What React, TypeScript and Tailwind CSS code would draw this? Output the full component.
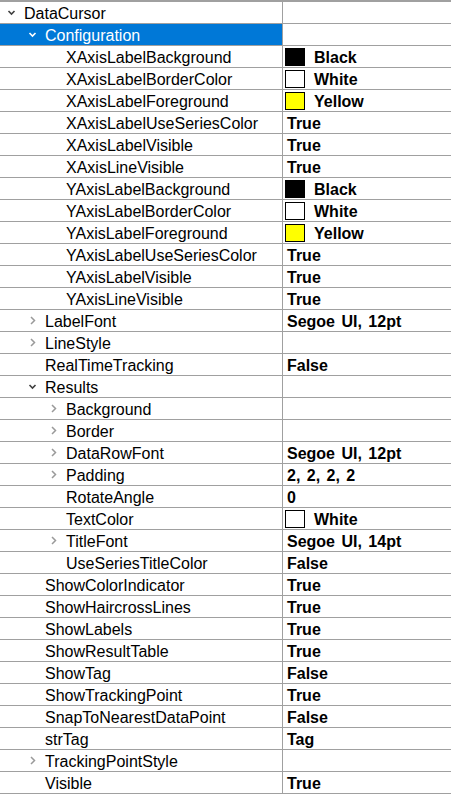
import React from "react";

type Row = {
  name: string;
  level: number;
  exp?: "open" | "closed";
  value?: string;
  swatch?: string;
  selected?: boolean;
};

const rows: Row[] = [
  { name: "DataCursor", level: 0, exp: "open" },
  { name: "Configuration", level: 1, exp: "open", selected: true },
  { name: "XAxisLabelBackground", level: 2, value: "Black", swatch: "#000000" },
  { name: "XAxisLabelBorderColor", level: 2, value: "White", swatch: "#ffffff" },
  { name: "XAxisLabelForeground", level: 2, value: "Yellow", swatch: "#ffff00" },
  { name: "XAxisLabelUseSeriesColor", level: 2, value: "True" },
  { name: "XAxisLabelVisible", level: 2, value: "True" },
  { name: "XAxisLineVisible", level: 2, value: "True" },
  { name: "YAxisLabelBackground", level: 2, value: "Black", swatch: "#000000" },
  { name: "YAxisLabelBorderColor", level: 2, value: "White", swatch: "#ffffff" },
  { name: "YAxisLabelForeground", level: 2, value: "Yellow", swatch: "#ffff00" },
  { name: "YAxisLabelUseSeriesColor", level: 2, value: "True" },
  { name: "YAxisLabelVisible", level: 2, value: "True" },
  { name: "YAxisLineVisible", level: 2, value: "True" },
  { name: "LabelFont", level: 1, exp: "closed", value: "Segoe UI, 12pt" },
  { name: "LineStyle", level: 1, exp: "closed" },
  { name: "RealTimeTracking", level: 1, value: "False" },
  { name: "Results", level: 1, exp: "open" },
  { name: "Background", level: 2, exp: "closed" },
  { name: "Border", level: 2, exp: "closed" },
  { name: "DataRowFont", level: 2, exp: "closed", value: "Segoe UI, 12pt" },
  { name: "Padding", level: 2, exp: "closed", value: "2, 2, 2, 2" },
  { name: "RotateAngle", level: 2, value: "0" },
  { name: "TextColor", level: 2, value: "White", swatch: "#ffffff" },
  { name: "TitleFont", level: 2, exp: "closed", value: "Segoe UI, 14pt" },
  { name: "UseSeriesTitleColor", level: 2, value: "False" },
  { name: "ShowColorIndicator", level: 1, value: "True" },
  { name: "ShowHaircrossLines", level: 1, value: "True" },
  { name: "ShowLabels", level: 1, value: "True" },
  { name: "ShowResultTable", level: 1, value: "True" },
  { name: "ShowTag", level: 1, value: "False" },
  { name: "ShowTrackingPoint", level: 1, value: "True" },
  { name: "SnapToNearestDataPoint", level: 1, value: "False" },
  { name: "strTag", level: 1, value: "Tag" },
  { name: "TrackingPointStyle", level: 1, exp: "closed" },
  { name: "Visible", level: 1, value: "True" },
];

const indent = ["pl-[24px]", "pl-[45px]", "pl-[66px]"];
const chevronLeft = ["left-[7px]", "left-[28px]", "left-[49px]"];

function Chevron({ open, selected }: { open: boolean; selected?: boolean }) {
  if (open) {
    return (
      <svg width="9" height="9" viewBox="0 0 9 9" className="block">
        <polyline
          points="1.5,3 4.5,6 7.5,3"
          fill="none"
          stroke={selected ? "#ffffff" : "#404040"}
          strokeWidth="1.6"
        />
      </svg>
    );
  }
  return (
    <svg width="9" height="9" viewBox="0 0 9 9" className="block">
      <polyline points="3,1 6.5,4.5 3,8" fill="none" stroke="#9a9a9a" strokeWidth="1.5" />
    </svg>
  );
}

function PropRow({ row }: { row: Row }) {
  return (
    <div className="flex h-[22px] border-b border-[#a0a0a0]">
      <div
        className={`relative flex w-[283px] shrink-0 items-center border-r border-[#a0a0a0] pt-[2px] ${indent[row.level]} ${
          row.selected ? "bg-[#0078d7] text-white" : "text-[#000000]"
        }`}
      >
        {row.exp && (
          <span className={`absolute top-[6px] ${chevronLeft[row.level]}`}>
            <Chevron open={row.exp === "open"} selected={row.selected} />
          </span>
        )}
        <span className="whitespace-nowrap">{row.name}</span>
      </div>
      <div className="flex flex-1 items-center font-bold">
        {row.swatch ? (
          <>
            <span
              className="ml-[2px] h-[18px] w-[20px] border border-black"
              style={{ backgroundColor: row.swatch }}
            />
            <span className="ml-[9px] pt-[2px]">{row.value}</span>
          </>
        ) : (
          row.value && (
            <span className="pl-[4px] pt-[2px] whitespace-nowrap [word-spacing:2px]">{row.value}</span>
          )
        )}
      </div>
    </div>
  );
}

export default function App() {
  return (
    <div className="h-[798px] w-[451px] overflow-hidden bg-white font-['Liberation_Sans',Arial,sans-serif] text-[16px] leading-none">
      <div className="border-t-2 border-[#a0a0a0]">
        {rows.map((r) => (
          <PropRow key={r.name + r.level} row={r} />
        ))}
      </div>
    </div>
  );
}
